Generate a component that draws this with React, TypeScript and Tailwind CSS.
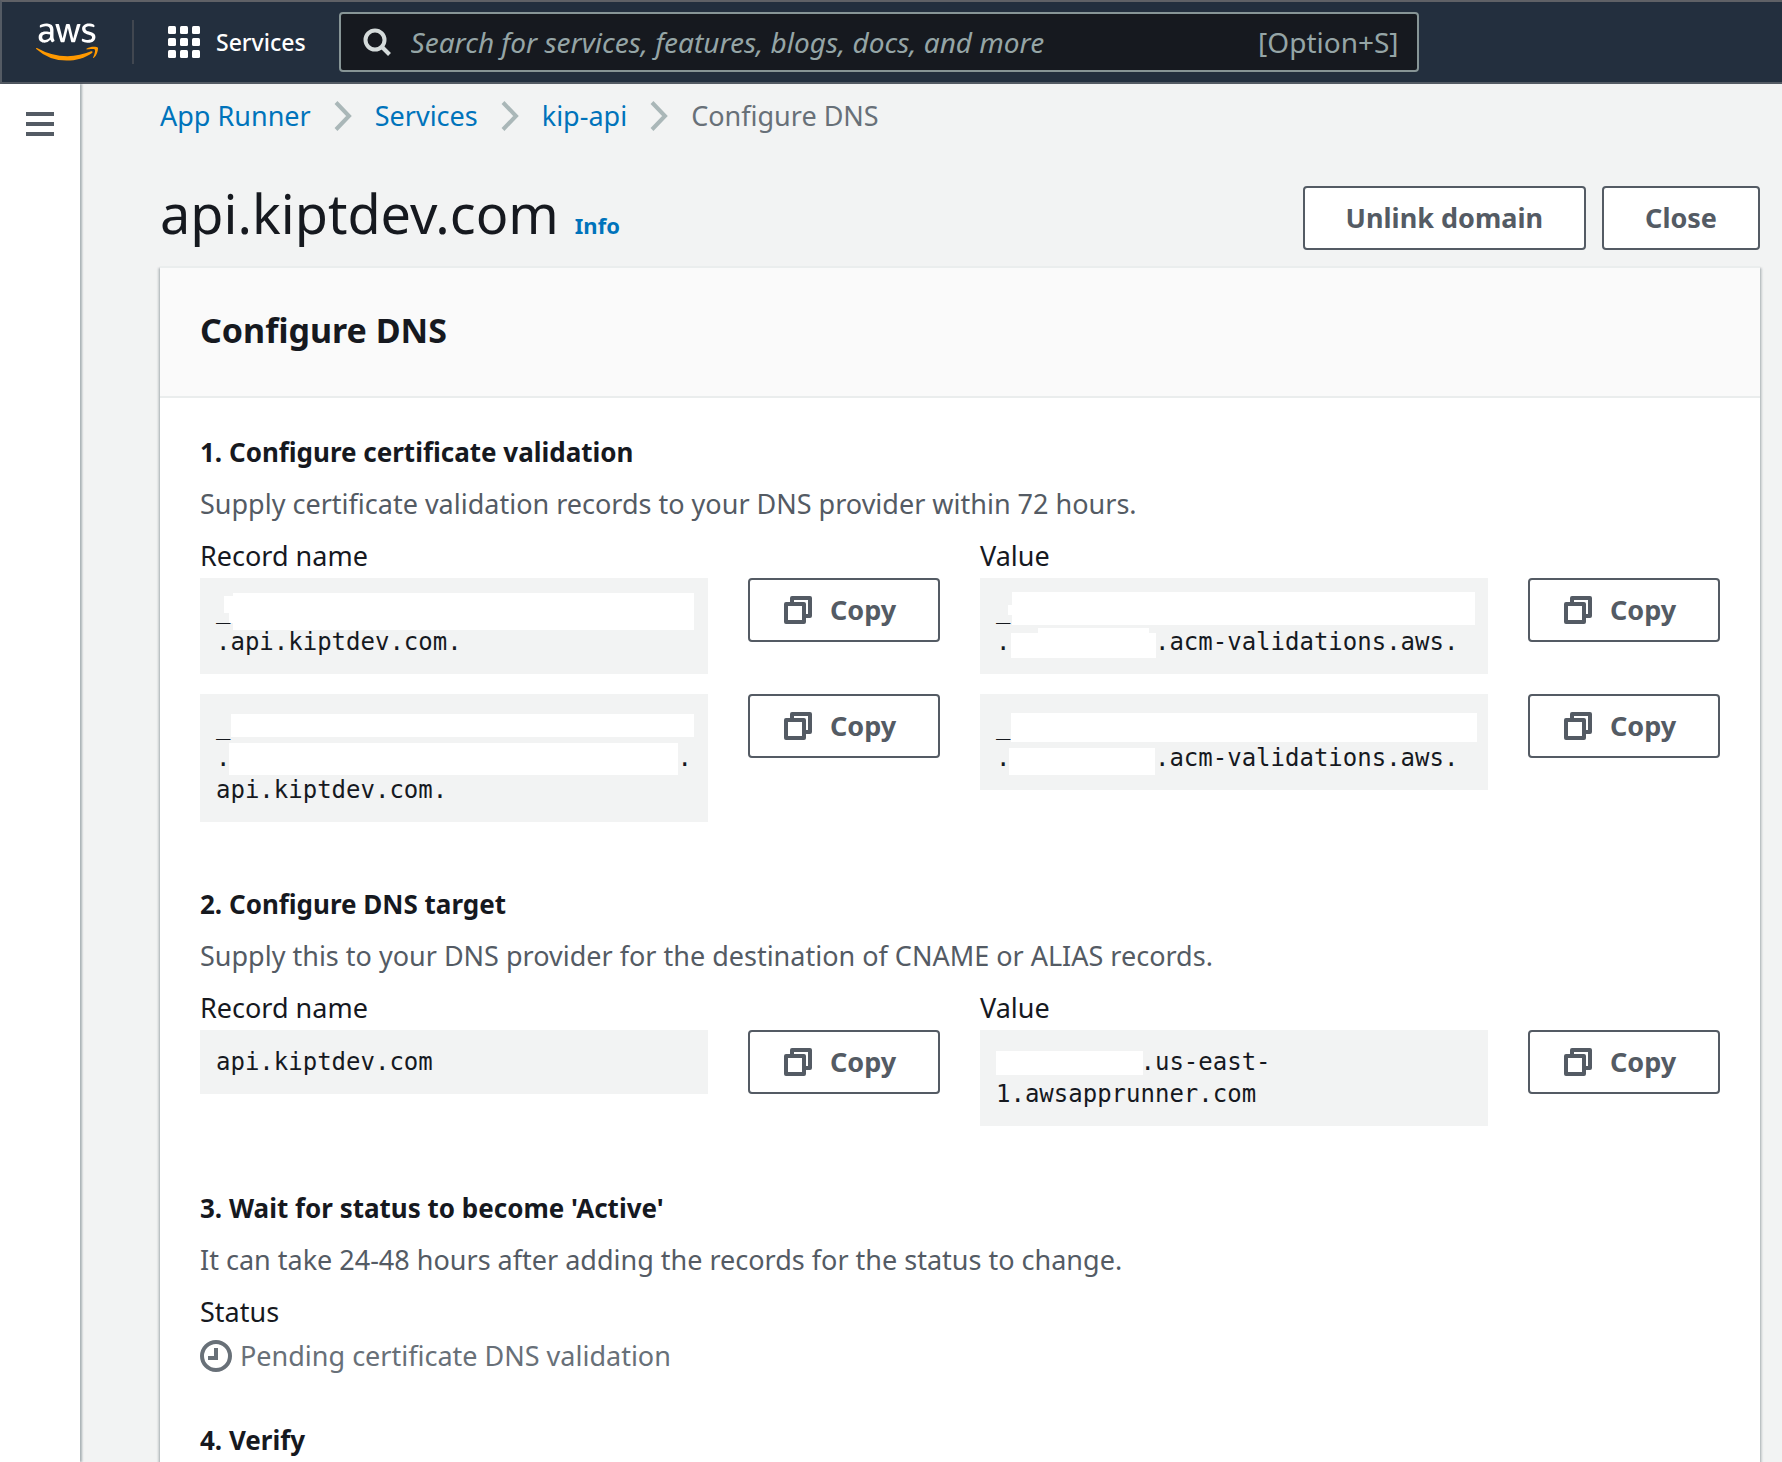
import React from 'react';
import { FaAws } from 'react-icons/fa';

function AwsLogo() {
  return (
    <a href="#home" aria-label="AWS" className="flex items-center">
      <svg width="0" height="0" className="absolute" aria-hidden="true">
        <linearGradient id="aws-fill" gradientUnits="userSpaceOnUse" x1="0" y1="0" x2="0" y2="512">
          <stop offset="0.56" stopColor="#ffffff" />
          <stop offset="0.56" stopColor="#ff9900" />
        </linearGradient>
      </svg>
      <FaAws className="h-[50px] w-[62px] fill-[url(#aws-fill)]" />
    </a>
  );
}

function GridIcon() {
  return (
    <svg width="32" height="32" viewBox="0 0 32 32" fill="currentColor" aria-hidden="true">
      {[0, 12, 24].map((y) =>
        [0, 12, 24].map((x) => <rect key={`${x}-${y}`} x={x} y={y} width="8" height="8" rx="1.5" />)
      )}
    </svg>
  );
}

function SearchIcon() {
  return (
    <svg width="28" height="28" viewBox="0 0 28 28" fill="none" stroke="currentColor" strokeWidth="4" className="shrink-0" aria-hidden="true">
      <circle cx="12" cy="12" r="9.5" />
      <path d="M18.5 18.5L26.5 26.5" />
    </svg>
  );
}

function CopyIcon() {
  return (
    <svg width="28" height="28" viewBox="0 0 28 28" fill="none" stroke="currentColor" strokeWidth="4" strokeLinejoin="round" className="shrink-0" aria-hidden="true">
      <rect x="2" y="8" width="18" height="18" />
      <path d="M8 7V2H26V20H21" />
    </svg>
  );
}

function PendingIcon() {
  return (
    <svg width="32" height="32" viewBox="0 0 32 32" fill="none" stroke="currentColor" strokeWidth="4" className="shrink-0" aria-hidden="true">
      <circle cx="16" cy="16" r="14" />
      <path d="M16 8V18H8" />
    </svg>
  );
}

function Chevron() {
  return (
    <svg width="18" height="30" viewBox="0 0 18 30" fill="none" stroke="#aab7b8" strokeWidth="4" aria-hidden="true">
      <path d="M2 1.5L15 15L2 28.5" />
    </svg>
  );
}

function Button({ children, className = 'px-[41px]' }: { children: React.ReactNode; className?: string }) {
  return (
    <button
      type="button"
      className={`flex h-16 shrink-0 items-center rounded border-2 border-[#545b64] bg-white text-[27px] font-bold text-[#545b64] ${className}`}
    >
      {children}
    </button>
  );
}

/** Solid block that hides a part of a record. */
function Mask({ className }: { className: string }) {
  return <span aria-hidden="true" className={`absolute bg-white ${className}`} />;
}

function Record({ children }: { children: React.ReactNode }) {
  return (
    <div className="flex items-start gap-10">
      <div className="relative min-w-0 flex-1 bg-[#f2f3f3] p-4 font-['DejaVu_Sans_Mono',monospace] text-[24px] leading-8 text-[#16191f]">
        {children}
      </div>
      <Button className="w-48 gap-[18px] pl-[34px]">
        <CopyIcon />
        Copy
      </Button>
    </div>
  );
}

function Section({ title, text, children }: { title: string; text?: string; children?: React.ReactNode }) {
  return (
    <section>
      <h3 className="text-[26px] font-bold">{title}</h3>
      {text && <p className="mt-2 text-[#545b64]">{text}</p>}
      {children && <div className="mt-2">{children}</div>}
    </section>
  );
}

function Records({ children }: { children: React.ReactNode }) {
  return (
    <>
      <div className="grid grid-cols-2 gap-x-10">
        <p>Record name</p>
        <p>Value</p>
      </div>
      <div className="mb-5 grid grid-cols-2 gap-x-10 gap-y-5">{children}</div>
    </>
  );
}

export default function App() {
  return (
    <div className="flex min-h-screen flex-col bg-[#f2f3f3] font-['Noto_Sans',sans-serif] text-[27px] leading-[44px] text-[#16191f]">
      <header className="flex h-[84px] items-center border-y-2 border-l-2 border-t-[#5f6166] border-b-[#545b64] border-l-[#545b64] bg-[#232f3e] pl-[34px] text-white">
        <AwsLogo />
        <div className="ml-[34px] h-11 w-0.5 bg-[#414750]" />
        <button type="button" className="ml-[34px] flex items-center gap-4 text-[23px] font-medium">
          <GridIcon />
          Services
        </button>
        <div className="ml-[33px] mr-6 flex h-[60px] max-w-[1080px] flex-1 items-center gap-5 rounded border-2 border-[#879596] bg-[#16191f] pl-[22px] pr-[18px] text-[28px] text-[#95a5a6]">
          <span className="flex text-[#d5dbdb]">
            <SearchIcon />
          </span>
          <input
            type="search"
            aria-label="Search"
            placeholder="Search for services, features, blogs, docs, and more"
            className="min-w-0 flex-1 bg-transparent italic outline-none placeholder:text-[#95a5a6]"
          />
          <span>[Option+S]</span>
        </div>
      </header>

      <div className="flex flex-1">
        <aside className="w-20 shrink-0 bg-white shadow-[2px_0_2px_0_rgba(0,28,36,0.3)]">
          <button type="button" aria-label="Open navigation" className="ml-[26px] mt-7 flex w-7 flex-col gap-1.5 text-[#545b64]">
            <span className="h-1 w-full bg-current" />
            <span className="h-1 w-full bg-current" />
            <span className="h-1 w-full bg-current" />
          </button>
        </aside>

        <main className="flex min-w-0 flex-1 flex-col pl-20 pr-[22px] pt-[10px]">
          <nav aria-label="Breadcrumb" className="flex items-center gap-[23px] text-[#0073bb]">
            <a href="#app-runner">App Runner</a>
            <Chevron />
            <a href="#services">Services</a>
            <Chevron />
            <a href="#kip-api">kip-api</a>
            <Chevron />
            <span className="text-[#687078]">Configure DNS</span>
          </nav>

          <div className="mt-12 flex items-start justify-between">
            <div className="flex items-baseline gap-4">
              <h1 className="text-[54px] leading-[54px]">api.kiptdev.com</h1>
              <a href="#info" className="text-[22px] leading-8 font-bold text-[#0073bb]">
                Info
              </a>
            </div>
            <div className="flex gap-4">
              <Button>Unlink domain</Button>
              <Button>Close</Button>
            </div>
          </div>

          <div className="mt-4 flex-1 border-t-2 border-[#eaeded] bg-white shadow-[0_2px_2px_0_rgba(0,28,36,0.3),2px_2px_2px_0_rgba(0,28,36,0.15),-2px_2px_2px_0_rgba(0,28,36,0.15)]">
            <div className="border-b-2 border-[#eaeded] bg-[#fafafa] px-10 pt-10 pb-11">
              <h2 className="text-[34px] font-bold">Configure DNS</h2>
            </div>
            <div className="flex flex-col gap-10 px-10 pt-8">
              <Section
                title="1. Configure certificate validation"
                text="Supply certificate validation records to your DNS provider within 72 hours."
              >
                <Records>
                  <Record>
                    <div>_</div>
                    <div>.api.kiptdev.com.</div>
                    <Mask className="top-[15px] right-[14px] left-[33px] h-[37px]" />
                    <Mask className="top-[18px] left-6 h-[17px] w-[9px]" />
                    <Mask className="top-[35px] left-[29px] h-[10px] w-1" />
                  </Record>
                  <Record>
                    <div>_</div>
                    <div className="flex">
                      <span className="w-[11ch]">.</span>
                      .acm-validations.aws.
                    </div>
                    <Mask className="top-[14px] right-[13px] left-8 h-[33px]" />
                    <Mask className="top-[27px] left-7 h-[10px] w-1" />
                    <Mask className="top-[55px] left-[31px] h-[25px] w-[145px]" />
                    <Mask className="top-[50px] left-[58px] h-[5px] w-[111px]" />
                  </Record>
                  <Record>
                    <div>_</div>
                    <div className="flex">
                      <span className="w-[32ch]">.</span>.
                    </div>
                    <div>api.kiptdev.com.</div>
                    <Mask className="top-5 right-[14px] left-[31px] h-[23px]" />
                    <Mask className="top-[49px] right-[30px] left-[29px] h-8" />
                  </Record>
                  <Record>
                    <div>_</div>
                    <div className="flex">
                      <span className="w-[11ch]">.</span>
                      .acm-validations.aws.
                    </div>
                    <Mask className="top-[19px] right-[11px] left-[31px] h-[29px]" />
                    <Mask className="top-[54px] left-[29px] h-[27px] w-[146px]" />
                  </Record>
                </Records>
              </Section>

              <Section
                title="2. Configure DNS target"
                text="Supply this to your DNS provider for the destination of CNAME or ALIAS records."
              >
                <Records>
                  <Record>api.kiptdev.com</Record>
                  <Record>
                    <div className="pl-[10ch]">.us-east-</div>
                    <div>1.awsapprunner.com</div>
                    <Mask className="top-[21px] left-4 h-6 w-[147px]" />
                  </Record>
                </Records>
              </Section>

              <Section
                title="3. Wait for status to become 'Active'"
                text="It can take 24-48 hours after adding the records for the status to change."
              >
                <p>Status</p>
                <p className="flex items-center gap-2 text-[#687078]">
                  <PendingIcon />
                  Pending certificate DNS validation
                </p>
              </Section>

              <Section title="4. Verify" />
            </div>
          </div>
        </main>
      </div>
    </div>
  );
}
